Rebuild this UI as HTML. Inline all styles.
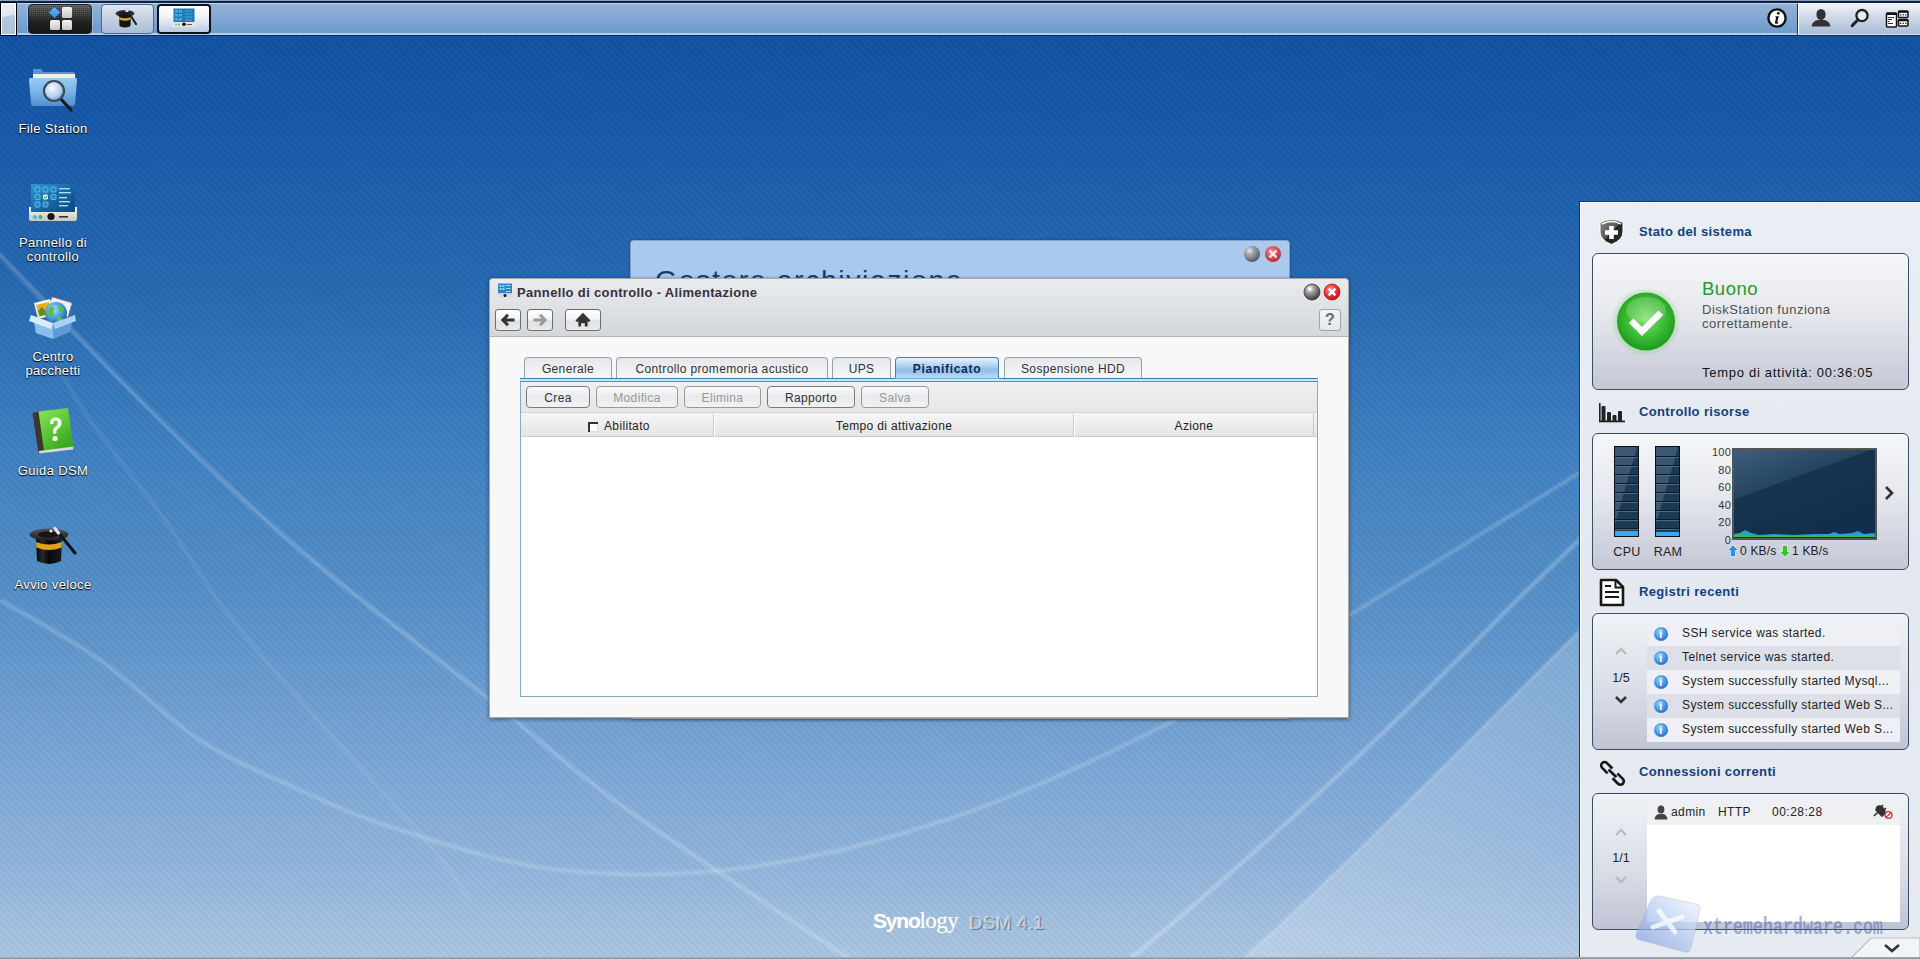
<!DOCTYPE html>
<html><head><meta charset="utf-8">
<style>
*{box-sizing:border-box;margin:0;padding:0}
html,body{width:1920px;height:959px;overflow:hidden}
body{position:relative;font-family:"Liberation Sans",sans-serif;
background:linear-gradient(to bottom,#0f4f9e 0px,#1253a3 50px,#1658a8 120px,#276ab2 300px,#3f80c2 450px,#5690c8 600px,#7aa6d6 760px,#90b4dc 860px,#a4c1e0 930px,#aac6e3 959px);}
.abs{position:absolute}
#stripes{position:absolute;left:0;top:0;width:1920px;height:959px;
background:repeating-linear-gradient(45deg,rgba(0,0,0,0.03) 0px,rgba(0,0,0,0.03) 2px,rgba(255,255,255,0.02) 2.5px,rgba(255,255,255,0.02) 4.5px,rgba(0,0,0,0.03) 5px)}
/* taskbar */
#tb{position:absolute;left:0;top:0;width:1920px;height:36px;
background:linear-gradient(to bottom,#8a9fbc 0,#8a9fbc 1px,#0d2244 1px,#0d2244 3px,#bcd6f0 3px,#bcd6f0 4px,#94b2d8 4px,#6e9acc 33px,#b4d0ee 33px,#b4d0ee 35px,#0a2a5a 35px,#0a2a5a 36px)}
.icolbl{position:absolute;width:106px;left:0;text-align:center;color:#fff;font-size:13px;line-height:14px;letter-spacing:0.35px;
text-shadow:0 1px 1px #000,0 0 2px rgba(0,0,0,.6)}
.title{font-weight:bold}
</style><style>
.nbtn{border:1px solid #6e6e6e;border-radius:3px;background:linear-gradient(to bottom,#ffffff 0,#f4f4f4 45%,#e2e2e2 55%,#eaeaea 100%)}
.tab{top:357px;height:22px;padding-top:1px;border:1px solid #9aa0a8;border-bottom:none;border-radius:4px 4px 0 0;background:linear-gradient(to bottom,#e4e6ea 0,#eceef2 40%,#f6f8fb 100%);
 text-align:center;font-size:12px;line-height:21px;color:#333;letter-spacing:.35px;white-space:nowrap}
.tab.act{border-color:#4a7ca8;background:linear-gradient(to bottom,#e8f4fc 0,#b4d4f0 30%,#90bce6 50%,#b8e0f8 85%,#c8ecfc 100%);font-weight:bold;color:#0b2a5a;letter-spacing:.7px;height:25px}
.tbtn{top:386px;height:22px;padding-top:1px;border:1px solid #7a7a7a;border-radius:4px;background:linear-gradient(to bottom,#fafbfc 0,#e8eaee 50%,#f0f2f4 100%);
 text-align:center;font-size:12px;line-height:20px;color:#333;letter-spacing:.35px;white-space:nowrap}
.tbtn.dis{color:#999;border-color:#999}
.hdr{top:419px;font-size:12px;line-height:15px;color:#222;letter-spacing:.35px;white-space:nowrap}
.wtitle{left:1639px;font-size:13px;line-height:16px;font-weight:bold;color:#11407e;letter-spacing:.35px;white-space:nowrap}
.wbox{left:1592px;width:317px;border:1px solid #3e4c60;border-radius:6px;background:linear-gradient(to bottom,#f6f7f9 0,#e6e8ee 45%,#c4c8d6 100%)}
.gauge{top:446px;width:25px;height:91px;background:repeating-linear-gradient(to bottom,#35526e 0,#35526e 1px,#1b3752 1px,#1b3752 9px);border:2px solid #111;box-shadow:inset 0 0 0 0 #000}
.logrow{left:1647px;width:253px;height:24px;font-size:12px;line-height:22px;color:#222;letter-spacing:.4px;white-space:nowrap;padding-left:35px}
.ii{position:absolute;font-style:normal;left:7px;top:5px;width:14px;height:14px;border-radius:50%;background:radial-gradient(circle at 40% 35%,#9ad0ff 0,#3a8ae0 55%,#1a5ab0 100%)}
.ii:after{content:"i";position:absolute;left:0;top:0;width:14px;text-align:center;color:#fff;font-weight:bold;font-size:11px;line-height:14px}
</style>
</head>
<body>
<div id="stripes"></div>
<svg class="abs" style="left:0;top:0" width="1920" height="959" viewBox="0 0 1920 959">
<defs><filter id="bl" x="-20%" y="-20%" width="140%" height="140%"><feGaussianBlur stdDeviation="1.5"/></filter>
<filter id="bl2" x="-20%" y="-20%" width="140%" height="140%"><feGaussianBlur stdDeviation="12"/></filter></defs>
<linearGradient id="bandg" gradientUnits="userSpaceOnUse" x1="1412" y1="790" x2="1540" y2="918"><stop offset="0" stop-color="#fff" stop-opacity=".2"/><stop offset="1" stop-color="#fff" stop-opacity=".1"/></linearGradient>
<g fill="none" stroke="#fff" filter="url(#bl)">
<path d="M-20.0,234.0 C-16.7,237.5 -28.3,225.7 0.0,255.0 C28.3,284.3 100.0,360.8 150.0,410.0 C200.0,459.2 243.3,501.7 300.0,550.0 C356.7,598.3 435.8,657.0 490.0,700.0 C544.2,743.0 565.0,764.8 625.0,808.0 C685.0,851.2 812.5,933.8 850.0,959.0" stroke-width="3" stroke-opacity="0.28"/>
<path d="M0.0,600.0 C16.7,610.0 66.7,636.7 100.0,660.0 C133.3,683.3 166.7,718.3 200.0,740.0 C233.3,761.7 266.7,775.0 300.0,790.0 C333.3,805.0 356.7,816.7 400.0,830.0 C443.3,843.3 501.7,863.8 560.0,870.0 C618.3,876.2 683.3,876.2 750.0,867.0 C816.7,857.8 889.5,839.3 960.0,815.0 C1030.5,790.7 1108.0,754.3 1173.0,721.0 C1238.0,687.7 1278.8,658.5 1350.0,615.0 C1421.2,571.5 1558.3,485.8 1600.0,460.0" stroke-width="3" stroke-opacity="0.25"/>
<path d="M60.0,370.0 C65.0,378.3 72.5,395.0 90.0,420.0 C107.5,445.0 142.5,488.3 165.0,520.0 C187.5,551.7 202.5,580.0 225.0,610.0 C247.5,640.0 272.5,668.3 300.0,700.0 C327.5,731.7 365.0,771.7 390.0,800.0 C415.0,828.3 436.7,853.3 450.0,870.0 C463.3,886.7 466.7,895.0 470.0,900.0" stroke-width="2.5" stroke-opacity="0.12"/>
<path d="M1130,959 C1250,860 1380,740 1517,600 L1600,520" stroke-width="3.5" stroke-opacity="0.3"/>
<path d="M1243,959 C1330,880 1420,790 1600,610" stroke-width="2" stroke-opacity="0.25"/>
</g>
<path d="M1243,959 C1330,880 1420,790 1600,610 L1600,959Z" fill="url(#bandg)"/>
</svg>

<div id="tb"></div>
<!-- left mini box -->
<div class="abs" style="left:0;top:2px;width:17px;height:34px;background:#000;"></div>
<div class="abs" style="left:1px;top:3px;width:15px;height:32px;background:#fff;"></div>
<div class="abs" style="left:2px;top:4px;width:13px;height:30px;background:linear-gradient(170deg,#e8eef6 0,#dde6f0 40%,#b7c9df 41%,#aebfd8 100%)"></div>
<!-- start button -->
<div class="abs" style="left:28px;top:4px;width:64px;height:30px;border-radius:4px;border:1px solid #1c2535;
background:linear-gradient(to bottom,#7c7c7c 0,#555 30%,#2a2a2a 60%,#1e1e1e 100%);box-shadow:0 0 0 1px rgba(200,220,240,.45)"></div>
<div class="abs" style="left:29px;top:5px;width:62px;height:28px;border-radius:3px;opacity:.3;
background:repeating-linear-gradient(90deg,#000 0 1px,transparent 1px 2px),repeating-linear-gradient(0deg,#000 0 1px,transparent 1px 2px)"></div>
<svg class="abs" style="left:28px;top:4px" width="64" height="30">
<defs><linearGradient id="sq" x1="0" y1="0" x2="0" y2="1"><stop offset="0" stop-color="#f4f4f4"/><stop offset="1" stop-color="#c8c8c8"/></linearGradient>
<linearGradient id="dia" x1="0" y1="0" x2="0" y2="1"><stop offset="0" stop-color="#6ab8ff"/><stop offset="1" stop-color="#2f86e0"/></linearGradient></defs>
<path d="M26.5,2.5 L32.5,8.5 L26.5,14.5 L20.5,8.5Z" fill="url(#dia)" stroke="#1a3a6a" stroke-width=".6"/>
<rect x="34" y="3" width="10" height="11" rx="1.5" fill="url(#sq)"/>
<rect x="22" y="16" width="10" height="10" rx="1.5" fill="url(#sq)"/>
<rect x="34" y="16" width="10" height="10" rx="1.5" fill="url(#sq)"/>
</svg>
<!-- hat button -->
<div class="abs" style="left:101px;top:4px;width:53px;height:30px;border-radius:4px;border:1px solid #50688c;
background:linear-gradient(to bottom,#dfe7f1 0,#c3d1e3 50%,#a9bdd8 100%)"></div>
<svg class="abs" style="left:115px;top:7px" width="26" height="23" viewBox="0 0 26 23">
<ellipse cx="10" cy="6.5" rx="9.5" ry="3.5" fill="#333"/>
<path d="M4,7 L4.5,19 Q10,22 15.5,19 L16,7Z" fill="#141414"/>
<path d="M4.2,10 Q10,12.5 15.8,10 L15.7,12.5 Q10,15 4.3,12.5Z" fill="#d9a520"/>
<ellipse cx="10" cy="6.5" rx="6" ry="1.8" fill="#1a1a1a"/>
<path d="M12,3 L21,17" stroke="#222" stroke-width="2.2" stroke-linecap="round"/>
<circle cx="12" cy="3.5" r="1.8" fill="#e8d0f0"/>
</svg>
<!-- control panel button -->
<div class="abs" style="left:157px;top:4px;width:54px;height:30px;border-radius:4px;border:2px solid #0a1220;
background:linear-gradient(to bottom,#ffffff 0,#f0f4f8 40%,#b8cbe2 100%)"></div>
<svg class="abs" style="left:172px;top:8px" width="24" height="20" viewBox="0 0 24 20">
<rect x="1.5" y="0.5" width="21" height="14" fill="#1f78b8"/>
<g fill="#58b8e8" opacity=".8"><rect x="3" y="2" width="3" height="2.5"/><rect x="7" y="2" width="3" height="2.5"/><rect x="3" y="6" width="3" height="2.5"/><rect x="7" y="6" width="3" height="2.5"/><rect x="3" y="10" width="3" height="2.5"/><rect x="7" y="10" width="3" height="2.5"/>
<rect x="13" y="2.5" width="7" height="1"/><rect x="13" y="5.5" width="7" height="1"/><rect x="13" y="8.5" width="7" height="1"/><rect x="13" y="11.5" width="7" height="1"/></g>
<rect x="0.5" y="14" width="23" height="5" fill="#e4e4e4"/>
<circle cx="4" cy="16.5" r="1" fill="#5ab0e0"/><circle cx="7" cy="16.5" r="1" fill="#5cc05c"/><circle cx="12" cy="16.2" r="1.8" fill="#111"/>
<rect x="15" y="16" width="5" height="1" fill="#555"/>
</svg>
<!-- right side taskbar -->
<svg class="abs" style="left:1766px;top:7px" width="22" height="22" viewBox="0 0 22 22">
<circle cx="11" cy="11" r="8.6" fill="#fff" stroke="#111" stroke-width="2.4"/>
<circle cx="12.3" cy="6.3" r="1.4" fill="#111"/>
<path d="M9.6,9.2 L12.8,9.2 L11.3,15 Q11.2,15.8 12.4,15.1 L12.2,16.2 Q10.5,17.2 9.3,16.6 Q8.7,16.2 9,15.2 L10.2,10.4 L9.3,10.4Z" fill="#111"/>
</svg>
<div class="abs" style="left:1797px;top:3px;width:123px;height:32px;background:linear-gradient(to bottom,#f0f4fa 0,#dfe6f0 20%,#c2cfe2 60%,#a8bbd6 100%);border-left:1px solid #1a3558;border-top:1px solid #fff;box-shadow:inset 1px 0 0 #fff, inset 0 -1px 0 #d8e4f2"></div>
<svg class="abs" style="left:1810px;top:8px" width="22" height="20" viewBox="0 0 22 20">
<ellipse cx="11" cy="6.5" rx="4.6" ry="5.6" fill="#333"/>
<path d="M1.5,18.5 Q2.5,12.5 8.5,12 L13.5,12 Q19.5,12.5 20.5,18.5Z" fill="#333"/>
</svg>
<svg class="abs" style="left:1849px;top:8px" width="22" height="20" viewBox="0 0 22 20">
<circle cx="13" cy="7.6" r="5.6" fill="#e8eef6" stroke="#222" stroke-width="2.3"/>
<path d="M9,11.8 L3.2,17.6" stroke="#222" stroke-width="3" stroke-linecap="round"/>
</svg>
<svg class="abs" style="left:1885px;top:9px" width="24" height="20" viewBox="0 0 24 20">
<rect x="1.5" y="4" width="10" height="14" rx="1" fill="#fff" stroke="#111" stroke-width="1.5"/>
<rect x="1.5" y="4" width="10" height="2" fill="#111"/>
<g fill="#333"><rect x="3" y="8" width="6" height="1"/><rect x="3" y="10" width="4" height="1"/><rect x="3" y="12" width="1.5" height="1"/><rect x="3" y="14" width="5" height="1"/></g>
<rect x="13.5" y="2" width="9.5" height="6.5" rx="1" fill="#fff" stroke="#111" stroke-width="1.5"/>
<rect x="13.5" y="2" width="9.5" height="1.8" fill="#111"/>
<rect x="13.5" y="10.5" width="9.5" height="6.5" rx="1" fill="#fff" stroke="#111" stroke-width="1.5"/>
<rect x="13.5" y="10.5" width="9.5" height="1.8" fill="#111"/>
<g fill="#222"><rect x="15" y="5.2" width="1.3" height="1.3"/><rect x="17.6" y="5.2" width="1.3" height="1.3"/><rect x="20.2" y="5.2" width="1.3" height="1.3"/><rect x="15" y="13.7" width="1.3" height="1.3"/><rect x="17.6" y="13.7" width="1.3" height="1.3"/><rect x="20.2" y="13.7" width="1.3" height="1.3"/></g>
</svg>
<!-- File Station -->
<svg class="abs" style="left:27px;top:66px" width="52" height="48" viewBox="0 0 52 48">
<defs>
<linearGradient id="fold" x1="0" y1="0" x2="0" y2="1"><stop offset="0" stop-color="#9ccbf0"/><stop offset=".5" stop-color="#7ab4e6"/><stop offset="1" stop-color="#4d8fd0"/></linearGradient>
<radialGradient id="lens" cx=".4" cy=".35" r=".7"><stop offset="0" stop-color="#f4f8ff"/><stop offset=".6" stop-color="#b8d2ee"/><stop offset="1" stop-color="#6a98c8"/></radialGradient>
</defs>
<path d="M6,3 L14,3 L16,6 L46,6 Q48,6 48,8 L48,12 L6,12Z" fill="#5a95d0"/>
<rect x="6" y="8" width="42" height="6" fill="#f2f0e0"/>
<path d="M3,12 L49,12 Q50,12 50,14 L48,38 Q48,40 46,40 L6,40 Q4,40 4,38 L2,14 Q2,12 3,12Z" fill="url(#fold)"/>
<path d="M33,32 L44,44" stroke="#1a1a1a" stroke-width="3.2" stroke-linecap="round"/>
<circle cx="27" cy="25" r="10" fill="url(#lens)" stroke="#39485a" stroke-width="2.2"/>
</svg>
<div class="icolbl" style="top:122px">File Station</div>

<!-- Control panel -->
<svg class="abs" style="left:28px;top:183px" width="50" height="40" viewBox="0 0 50 40">
<defs><linearGradient id="scr" x1="0" y1="0" x2="1" y2="1"><stop offset="0" stop-color="#2f95d6"/><stop offset=".6" stop-color="#15609e"/><stop offset="1" stop-color="#0c4a86"/></linearGradient>
<linearGradient id="base" x1="0" y1="0" x2="0" y2="1"><stop offset="0" stop-color="#f8f8f8"/><stop offset="1" stop-color="#c6c6c6"/></linearGradient></defs>
<rect x="3" y="1" width="44" height="28" fill="url(#scr)"/>
<g fill="#2a8cc4" stroke="#5cc0ec" stroke-width="1" opacity=".95">
<rect x="7" y="4" width="5" height="5" rx="1"/><rect x="15" y="4" width="5" height="5" rx="1"/><rect x="23" y="4" width="5" height="5" rx="1"/>
<rect x="7" y="11.5" width="5" height="5" rx="1"/><rect x="23" y="11.5" width="5" height="5" rx="1"/>
<rect x="7" y="19" width="5" height="5" rx="1"/><rect x="15" y="19" width="5" height="5" rx="1"/></g>
<rect x="15" y="11.5" width="5" height="5" rx="1" fill="#d8f0e0"/>
<path d="M16,14 L17.3,15.3 L19.3,12.8" stroke="#2a8a3a" stroke-width="1" fill="none"/>
<g fill="#a8dcf8"><rect x="31" y="5" width="11" height="1.4"/><rect x="31" y="9" width="12" height="1.4"/><rect x="31" y="14" width="8" height="1.4"/><rect x="31" y="18" width="11" height="1.4"/><rect x="31" y="22" width="9" height="1.4"/></g>
<path d="M1,24 L3,24 L3,29 L47,29 L47,24 L49,24 L49,36 Q49,38 47,38 L3,38 Q1,38 1,36Z" fill="url(#base)"/>
<circle cx="7" cy="34" r="2" fill="#4ab0e8"/><circle cx="12.5" cy="34" r="2" fill="#40b848"/>
<circle cx="23" cy="33.5" r="3.6" fill="#151515"/>
<rect x="31" y="33" width="9" height="1.6" fill="#333"/>
</svg>
<div class="icolbl" style="top:236px">Pannello di<br>controllo</div>

<!-- Centro pacchetti -->
<svg class="abs" style="left:28px;top:293px" width="50" height="50" viewBox="0 0 50 50">
<defs><linearGradient id="box" x1="0" y1="0" x2="0" y2="1"><stop offset="0" stop-color="#bfe0fa"/><stop offset="1" stop-color="#6ea8e0"/></linearGradient>
<radialGradient id="globe" cx=".4" cy=".35" r=".7"><stop offset="0" stop-color="#9ee0ff"/><stop offset=".6" stop-color="#3a9ad8"/><stop offset="1" stop-color="#1a5aa0"/></radialGradient></defs>
<path d="M24,4 L44,10 L40,24 L20,18Z" fill="#f0f0f0" stroke="#e06060" stroke-width="1" stroke-dasharray="2 2"/>
<path d="M6,10 L22,6 L26,22 L10,26Z" fill="#f4f4e8"/>
<path d="M8,12 L21,9 L24,21 L11,24Z" fill="#e8b020"/>
<path d="M10,18 L14,14 L18,19 L22,16 L23,20 L12,23Z" fill="#5a8a2a"/>
<circle cx="28" cy="20" r="11" fill="url(#globe)"/>
<path d="M21,15 Q25,12 27,16 Q24,19 26,23 Q22,24 20,20Z M30,12 Q35,13 36,18 Q33,20 31,17Z M29,24 Q34,23 35,28 Q31,30 29,28Z" fill="#6ab840"/>
<path d="M5,24 L25,31 L25,46 L8,40Z" fill="#8cc0ec"/>
<path d="M25,31 L45,24 L42,39 L25,46Z" fill="#5e9ad6"/>
<path d="M3,22 L25,30 L23,36 L1,28Z" fill="#d4ecfc"/>
<path d="M25,30 L47,22 L48,28 L27,36Z" fill="#a8d2f4"/>
</svg>
<div class="icolbl" style="top:350px">Centro<br>pacchetti</div>

<!-- Guida DSM -->
<svg class="abs" style="left:30px;top:408px" width="46" height="48" viewBox="0 0 46 48">
<defs><linearGradient id="book" x1="0" y1="0" x2=".6" y2="1"><stop offset="0" stop-color="#8ee858"/><stop offset=".5" stop-color="#62c83a"/><stop offset="1" stop-color="#3aa820"/></linearGradient></defs>
<path d="M2.5,5 L11,3 L17,44 L8.5,45.5Z" fill="#3e3430"/>
<path d="M8.5,3.5 L38,0 L43.5,39 L14,43Z" fill="url(#book)"/>
<path d="M8.5,43 L43.5,38.5 L43,41.5 L9.5,45.5Z" fill="#d8d8d8"/>
<g transform="translate(-1.5,0)"><path d="M21.5,16 Q21,10 27,9.5 Q33,9.5 33,15 Q33,19 29,21 Q27.5,22 27.8,25.5 L24.5,25.8 Q23.8,20.5 27,18.5 Q29.5,17 29.3,14.8 Q29,12.5 27,12.6 Q24.8,12.8 25,16Z" fill="#f4fff0"/>
<circle cx="26.5" cy="30.5" r="2.6" fill="#f4fff0"/></g>
</svg>
<div class="icolbl" style="top:464px">Guida DSM</div>

<!-- Avvio veloce -->
<svg class="abs" style="left:27px;top:520px" width="52" height="50" viewBox="0 0 52 50">
<defs><linearGradient id="hat" x1="0" y1="0" x2="1" y2="0"><stop offset="0" stop-color="#050505"/><stop offset=".25" stop-color="#2a2a2a"/><stop offset=".5" stop-color="#080808"/><stop offset="1" stop-color="#1c1c1c"/></linearGradient>
<linearGradient id="brim" x1="0" y1="0" x2="0" y2="1"><stop offset="0" stop-color="#555"/><stop offset="1" stop-color="#1e1e1e"/></linearGradient></defs>
<path d="M9,18 L10,41 Q22,47 34,41 L35,18Z" fill="url(#hat)"/>
<path d="M9.2,22 Q22,27 34.8,22 L34.6,27.5 Q22,32.5 9.4,27.5Z" fill="#e0a418"/>
<ellipse cx="22" cy="14.5" rx="19.5" ry="6" fill="url(#brim)"/>
<ellipse cx="21" cy="14.5" rx="10" ry="3.3" fill="#151515"/>
<path d="M28.5,9 L48,33" stroke="#141414" stroke-width="3.2" stroke-linecap="round"/>
<path d="M28,8.5 L31.5,13" stroke="#e8dcf4" stroke-width="3.4" stroke-linecap="round"/>
<circle cx="24" cy="11" r="1.6" fill="#fff" opacity=".9"/>
</svg>
<div class="icolbl" style="top:578px">Avvio veloce</div>
<!-- background window: Gestore archiviazione -->
<div class="abs" style="left:630px;top:240px;width:660px;height:480px;border-radius:4px 4px 0 0;background:linear-gradient(to bottom,#a9c9ed 0,#a9c9ed 100px,#c8d0d8 100px);border:1px solid #7fa3cc;border-bottom:1px solid #6a7a8a;box-shadow:0 0 3px rgba(0,0,0,.35)"></div>
<div class="abs" style="left:655px;top:263px;font-size:28.5px;line-height:34px;color:#0f3f78;letter-spacing:1.55px;white-space:nowrap">Gestore archiviazione</div>
<svg class="abs" style="left:1240px;top:244px" width="44" height="20" viewBox="0 0 44 20">
<defs><radialGradient id="ballg" cx=".35" cy=".3" r=".75"><stop offset="0" stop-color="#f4f4f4"/><stop offset=".35" stop-color="#9a9a9a"/><stop offset="1" stop-color="#3a3a3a"/></radialGradient>
<radialGradient id="ballr" cx=".4" cy=".35" r=".75"><stop offset="0" stop-color="#ff8080"/><stop offset=".6" stop-color="#e02020"/><stop offset="1" stop-color="#901010"/></radialGradient></defs>
<circle cx="12" cy="10" r="8" fill="url(#ballg)" opacity=".8"/>
<circle cx="33" cy="10" r="8" fill="url(#ballr)" opacity=".8"/>
<path d="M29.5,6.5 L36.5,13.5 M36.5,6.5 L29.5,13.5" stroke="#fff" stroke-width="2.4" opacity=".85"/>
</svg>

<!-- main window -->
<div class="abs" id="mw" style="left:489px;top:278px;width:860px;height:440px;border-radius:4px 4px 0 0;background:#f8f8f8;border:1px solid #a9a9a9;box-shadow:0 1px 4px rgba(0,0,0,.45)">
 <div class="abs" style="left:0;top:0;width:858px;height:58px;border-radius:3px 3px 0 0;background:linear-gradient(to bottom,#e9ebee 0,#dfe2e6 45%,#d3d6da 100%);border-bottom:1px solid #b5b5b5"></div>
</div>
<svg class="abs" style="left:497px;top:283px" width="16" height="15" viewBox="0 0 16 15">
<rect x="1" y="0.5" width="14" height="10" fill="#2a88c8"/>
<g fill="#8ad8ff"><rect x="2.5" y="2" width="2" height="2"/><rect x="5.5" y="2" width="2" height="2"/><rect x="2.5" y="5" width="2" height="2"/><rect x="5.5" y="5" width="2" height="2"/><rect x="9" y="2" width="4.5" height="1"/><rect x="9" y="5" width="4.5" height="1"/><rect x="9" y="8" width="4.5" height="1"/></g>
<rect x="0.5" y="10.5" width="15" height="4" fill="#ddd"/><circle cx="8" cy="12.5" r="1.5" fill="#111"/>
</svg>
<div class="abs title" style="left:517px;top:285px;font-size:13px;line-height:16px;color:#3a303a;letter-spacing:0.34px;white-space:nowrap">Pannello di controllo - Alimentazione</div>
<!-- min / close -->
<svg class="abs" style="left:1300px;top:281px" width="44" height="22" viewBox="0 0 44 22">
<defs><radialGradient id="ballg2" cx=".38" cy=".3" r=".8"><stop offset="0" stop-color="#fafafa"/><stop offset=".25" stop-color="#b0b0b0"/><stop offset=".7" stop-color="#5a5a5a"/><stop offset="1" stop-color="#303030"/></radialGradient>
<radialGradient id="ballr2" cx=".4" cy=".35" r=".8"><stop offset="0" stop-color="#ff9090"/><stop offset=".55" stop-color="#e42a2a"/><stop offset="1" stop-color="#a01010"/></radialGradient></defs>
<circle cx="12" cy="11" r="8" fill="url(#ballg2)" stroke="#333" stroke-width=".8"/><circle cx="9.5" cy="8" r="1.8" fill="#fff" opacity=".9"/>
<circle cx="32" cy="11" r="8" fill="url(#ballr2)" stroke="#b01818" stroke-width=".8"/>
<path d="M28.6,7.6 L35.4,14.4 M35.4,7.6 L28.6,14.4" stroke="#fff" stroke-width="2.6"/>
</svg>
<!-- nav buttons -->
<div class="abs nbtn" style="left:495px;top:309px;width:26px;height:22px"></div>
<div class="abs nbtn" style="left:527px;top:309px;width:26px;height:22px"></div>
<div class="abs nbtn" style="left:565px;top:309px;width:36px;height:22px"></div>
<div class="abs nbtn" style="left:1319px;top:309px;width:22px;height:22px;border-color:#a4a4a4;background:linear-gradient(to bottom,#f2f3f5,#e6e8ea)"></div>
<svg class="abs" style="left:495px;top:309px" width="110" height="22" viewBox="0 0 110 22">
<path d="M8,11 L19.5,11 M13,5.8 L7.8,11 L13,16.2" stroke="#333" stroke-width="3" fill="none" stroke-linejoin="miter"/>
<path d="M50,11 L38.5,11 M45,5.8 L50.2,11 L45,16.2" stroke="#9a9a9a" stroke-width="3" fill="none" stroke-linejoin="miter"/>
<path d="M81.4,12.4 L87.9,5.6 L94.6,12.4" stroke="#333" stroke-width="2.6" fill="none"/><path d="M83.4,11.2 L87.9,7 L92.6,11.2 L92.6,17.6 L89.8,17.6 L89.8,14.2 L86.1,14.2 L86.1,17.6 L83.4,17.6Z" fill="#333"/>
</svg>
<div class="abs" style="left:1319px;top:309px;width:22px;height:22px;text-align:center;font-weight:bold;font-size:16px;line-height:22px;color:#6a6a6a">?</div>

<!-- tabs -->
<div class="abs tab" style="left:524px;width:88px">Generale</div>
<div class="abs tab" style="left:616px;width:212px">Controllo promemoria acustico</div>
<div class="abs tab" style="left:832px;width:59px">UPS</div>
<div class="abs tab act" style="left:895px;width:104px">Pianificato</div>
<div class="abs tab" style="left:1004px;width:138px">Sospensione HDD</div>
<!-- panel -->
<div class="abs" style="left:520px;top:378px;width:798px;height:319px;border:1px solid #86abc6;background:#fff"></div>
<div class="abs" style="left:520px;top:378px;width:375px;height:4px;background:linear-gradient(to bottom,#3a7aa8 0,#3a7aa8 1px,#b8ecff 1px,#b8ecff 3px,#5a8eb4 3px)"></div>
<div class="abs" style="left:999px;top:378px;width:319px;height:4px;background:linear-gradient(to bottom,#3a7aa8 0,#3a7aa8 1px,#b8ecff 1px,#b8ecff 3px,#5a8eb4 3px)"></div>
<div class="abs" style="left:895px;top:379px;width:104px;height:3px;background:linear-gradient(to bottom,#c4ecfc,#b8ecff 2px,#5a8eb4 2px)"></div>
<div class="abs" style="left:521px;top:382px;width:796px;height:31px;background:linear-gradient(to bottom,#f0f0f0,#e6e6e6);border-bottom:1px solid #d4d4d4"></div>
<div class="abs tbtn" style="left:526px;width:64px">Crea</div>
<div class="abs tbtn dis" style="left:596px;width:82px">Modifica</div>
<div class="abs tbtn dis" style="left:684px;width:77px">Elimina</div>
<div class="abs tbtn" style="left:767px;width:88px">Rapporto</div>
<div class="abs tbtn dis" style="left:861px;width:68px">Salva</div>
<!-- grid header -->
<div class="abs" style="left:521px;top:413px;width:796px;height:24px;background:linear-gradient(to bottom,#f6f6f6 0,#ededed 50%,#e4e4e4 100%);border-bottom:1px solid #cbcbcb"></div>
<div class="abs" style="left:713px;top:413px;width:2px;height:24px;background:linear-gradient(to right,#c8c8c8 1px,#fff 1px)"></div>
<div class="abs" style="left:1073px;top:413px;width:2px;height:24px;background:linear-gradient(to right,#c8c8c8 1px,#fff 1px)"></div>
<div class="abs" style="left:1313px;top:413px;width:1px;height:24px;background:#c8c8c8"></div>
<div class="abs" style="left:588px;top:422px;width:10px;height:10px;background:#fff;border-left:2px solid #333;border-top:2px solid #333;box-shadow:inset -1px -1px 0 #ddd"></div>
<div class="abs hdr" style="left:604px">Abilitato</div>
<div class="abs hdr" style="left:715px;width:358px;text-align:center">Tempo di attivazione</div>
<div class="abs hdr" style="left:1075px;width:238px;text-align:center">Azione</div>
<!-- widget panel -->
<div class="abs" style="left:1579px;top:201px;width:341px;height:758px;background:linear-gradient(to bottom,#e9eef5 0,#e4e9f1 50%,#e6ebf2 100%);border-left:1px solid #17365e;border-top:1px solid #17365e;box-shadow:inset 1px 1px 0 #fff"></div>

<!-- section 1: Stato del sistema -->
<svg class="abs" style="left:1598px;top:218px" width="27" height="28" viewBox="0 0 27 28">
<defs><linearGradient id="shg" x1="0" y1="0" x2="1" y2="1"><stop offset="0" stop-color="#888"/><stop offset=".5" stop-color="#555"/><stop offset=".51" stop-color="#222"/><stop offset="1" stop-color="#333"/></linearGradient></defs>
<path d="M13.5,1.5 Q20,1.5 25,4.5 L25,14 Q25,22 13.5,26.5 Q2,22 2,14 L2,4.5 Q7,1.5 13.5,1.5Z" fill="url(#shg)" stroke="#fff" stroke-width="1"/>
<path d="M4,6 Q13.5,1 23,6" stroke="#fff" stroke-width="1.5" fill="none"/>
<path d="M11.2,8 L15.8,8 L15.8,12.2 L20,12.2 L20,16.8 L15.8,16.8 L15.8,21 L11.2,21 L11.2,16.8 L7,16.8 L7,12.2 L11.2,12.2Z" fill="#fff"/>
</svg>
<div class="abs wtitle" style="top:224px">Stato del sistema</div>
<div class="abs wbox" style="top:253px;height:137px"></div>
<svg class="abs" style="left:1610px;top:286px" width="72" height="72" viewBox="0 0 72 72">
<defs><radialGradient id="okg" cx=".5" cy=".45" r=".55"><stop offset="0" stop-color="#80e070"/><stop offset=".6" stop-color="#3cbc34"/><stop offset="1" stop-color="#1a9a1a"/></radialGradient>
<radialGradient id="okglow" cx=".5" cy=".5" r=".5"><stop offset=".7" stop-color="#7ad070" stop-opacity=".6"/><stop offset="1" stop-color="#7ad070" stop-opacity="0"/></radialGradient></defs>
<circle cx="36" cy="36" r="35" fill="url(#okglow)"/>
<circle cx="36" cy="35.5" r="29" fill="url(#okg)"/>
<ellipse cx="36" cy="24" rx="20" ry="13" fill="#fff" opacity=".18"/>
<path d="M23.5,37 L32,45.5 L48.5,29" stroke="#fff" stroke-width="6.5" fill="none" stroke-linecap="square"/>
</svg>
<div class="abs" style="left:1702px;top:279px;font-size:18.5px;line-height:20px;color:#2a982c;letter-spacing:.5px">Buono</div>
<div class="abs" style="left:1702px;top:303px;font-size:13px;line-height:14px;color:#505050;letter-spacing:.5px;white-space:nowrap">DiskStation funziona<br>correttamente.</div>
<div class="abs" style="left:1702px;top:366px;font-size:13px;line-height:14px;color:#111;letter-spacing:.72px;white-space:nowrap">Tempo di attività: 00:36:05</div>

<!-- section 2: Controllo risorse -->
<svg class="abs" style="left:1598px;top:402px" width="28" height="21" viewBox="0 0 28 21">
<g fill="#222"><rect x="1" y="1" width="1.6" height="19"/><rect x="3.5" y="4" width="4" height="16" rx="1"/><rect x="9" y="10" width="4" height="10" rx="1"/><rect x="14.5" y="13" width="4" height="7" rx="1"/><rect x="20" y="9" width="4" height="11" rx="1"/><rect x="1" y="18.5" width="26" height="1.8"/></g>
</svg>
<div class="abs wtitle" style="top:404px">Controllo risorse</div>
<div class="abs wbox" style="top:433px;height:137px"></div>
<svg class="abs" style="left:1614px;top:446px" width="25" height="91" viewBox="0 0 25 91">
<rect x="0" y="0" width="25" height="91" fill="#0a0f16"/>
<rect x="1" y="1" width="23" height="89" fill="#1d3a55"/>
<path d="M1,1 L23,1 L1,78Z" fill="#46627c" opacity=".75"/>
<rect x="1" y="10" width="23" height="1" fill="#0c1a28"/><rect x="1" y="11" width="23" height="1" fill="#5a7690" opacity=".8"/><rect x="1" y="19" width="23" height="1" fill="#0c1a28"/><rect x="1" y="20" width="23" height="1" fill="#5a7690" opacity=".8"/><rect x="1" y="28" width="23" height="1" fill="#0c1a28"/><rect x="1" y="29" width="23" height="1" fill="#5a7690" opacity=".8"/><rect x="1" y="37" width="23" height="1" fill="#0c1a28"/><rect x="1" y="38" width="23" height="1" fill="#5a7690" opacity=".8"/><rect x="1" y="46" width="23" height="1" fill="#0c1a28"/><rect x="1" y="47" width="23" height="1" fill="#5a7690" opacity=".8"/><rect x="1" y="55" width="23" height="1" fill="#0c1a28"/><rect x="1" y="56" width="23" height="1" fill="#5a7690" opacity=".8"/><rect x="1" y="64" width="23" height="1" fill="#0c1a28"/><rect x="1" y="65" width="23" height="1" fill="#5a7690" opacity=".8"/><rect x="1" y="73" width="23" height="1" fill="#0c1a28"/><rect x="1" y="74" width="23" height="1" fill="#5a7690" opacity=".8"/><rect x="1" y="82" width="23" height="1" fill="#0c1a28"/><rect x="1" y="83" width="23" height="1" fill="#5a7690" opacity=".8"/>
<rect x="1" y="85" width="23" height="5" fill="#38a8f0"/>
</svg>
<svg class="abs" style="left:1655px;top:446px" width="25" height="91" viewBox="0 0 25 91">
<rect x="0" y="0" width="25" height="91" fill="#0a0f16"/>
<rect x="1" y="1" width="23" height="89" fill="#1d3a55"/>
<path d="M1,1 L23,1 L1,78Z" fill="#46627c" opacity=".75"/>
<rect x="1" y="10" width="23" height="1" fill="#0c1a28"/><rect x="1" y="11" width="23" height="1" fill="#5a7690" opacity=".8"/><rect x="1" y="19" width="23" height="1" fill="#0c1a28"/><rect x="1" y="20" width="23" height="1" fill="#5a7690" opacity=".8"/><rect x="1" y="28" width="23" height="1" fill="#0c1a28"/><rect x="1" y="29" width="23" height="1" fill="#5a7690" opacity=".8"/><rect x="1" y="37" width="23" height="1" fill="#0c1a28"/><rect x="1" y="38" width="23" height="1" fill="#5a7690" opacity=".8"/><rect x="1" y="46" width="23" height="1" fill="#0c1a28"/><rect x="1" y="47" width="23" height="1" fill="#5a7690" opacity=".8"/><rect x="1" y="55" width="23" height="1" fill="#0c1a28"/><rect x="1" y="56" width="23" height="1" fill="#5a7690" opacity=".8"/><rect x="1" y="64" width="23" height="1" fill="#0c1a28"/><rect x="1" y="65" width="23" height="1" fill="#5a7690" opacity=".8"/><rect x="1" y="73" width="23" height="1" fill="#0c1a28"/><rect x="1" y="74" width="23" height="1" fill="#5a7690" opacity=".8"/><rect x="1" y="82" width="23" height="1" fill="#0c1a28"/><rect x="1" y="83" width="23" height="1" fill="#5a7690" opacity=".8"/>
<rect x="1" y="86" width="23" height="4" fill="#38a8f0"/>
</svg>
<div class="abs" style="left:1606px;top:545px;width:42px;text-align:center;font-size:12.5px;line-height:14px;color:#222;letter-spacing:.3px">CPU</div>
<div class="abs" style="left:1647px;top:545px;width:42px;text-align:center;font-size:12.5px;line-height:14px;color:#222;letter-spacing:.3px">RAM</div>
<div class="abs" style="left:1700px;top:444px;width:31px;text-align:right;font-size:11px;line-height:17.5px;color:#333;letter-spacing:.2px">100<br>80<br>60<br>40<br>20<br>0</div>
<div class="abs" style="left:1732px;top:448px;width:145px;height:92px;border:2px solid #555;background:linear-gradient(160deg,#3e5e7c 0,#24445f 35%,#17344f 36%,#0f2c48 100%)"></div>
<svg class="abs" style="left:1734px;top:528px" width="141" height="10" viewBox="0 0 141 10">
<path d="M0,9 L0,6 L6,5 L11,2 L17,5 L25,7 L40,6 L60,7 L80,6 L95,6 L100,4 L106,6 L118,5 L124,3 L130,6 L141,5 L141,9Z" fill="#2a9ad8"/>
<path d="M0,9 L0,7 L10,6 L20,8 L40,7 L60,8 L80,7 L141,7 L141,9Z" fill="#30c040"/>
</svg>
<svg class="abs" style="left:1883px;top:485px" width="12" height="16" viewBox="0 0 12 16"><path d="M3,2 L9,8 L3,14" stroke="#333" stroke-width="2.6" fill="none"/></svg>
<svg class="abs" style="left:1726px;top:544px" width="14" height="14" viewBox="0 0 14 14"><path d="M7,1 L12.5,6.5 L9.5,6.5 L9.5,12.5 L4.5,12.5 L4.5,6.5 L1.5,6.5Z" fill="#2a90e0" stroke="#fff" stroke-width=".6"/></svg>
<div class="abs" style="left:1740px;top:544px;font-size:12px;line-height:14px;color:#222;letter-spacing:.2px;white-space:nowrap">0 KB/s</div>
<svg class="abs" style="left:1778px;top:544px" width="14" height="14" viewBox="0 0 14 14"><path d="M7,13 L12.5,7.5 L9.5,7.5 L9.5,1.5 L4.5,1.5 L4.5,7.5 L1.5,7.5Z" fill="#3cc030" stroke="#fff" stroke-width=".6"/></svg>
<div class="abs" style="left:1792px;top:544px;font-size:12px;line-height:14px;color:#222;letter-spacing:.2px;white-space:nowrap">1 KB/s</div>

<!-- section 3: Registri recenti -->
<svg class="abs" style="left:1599px;top:578px" width="26" height="29" viewBox="0 0 26 29">
<path d="M2,2 L17,2 L24,9 L24,27 L2,27Z" fill="#fff" stroke="#181818" stroke-width="2.6" stroke-linejoin="round"/>
<path d="M16.5,2 L16.5,9.5 L24,9.5" fill="none" stroke="#181818" stroke-width="2"/>
<g fill="#181818"><rect x="6" y="7" width="6" height="2"/><rect x="6" y="13" width="14" height="2"/><rect x="6" y="18" width="14" height="2"/></g>
</svg>
<div class="abs wtitle" style="top:584px">Registri recenti</div>
<div class="abs wbox" style="top:613px;height:137px;background:linear-gradient(to bottom,#f0f2f6 0,#d8dce6 60%,#bfc4d4 100%)"></div>
<div class="abs" style="left:1647px;top:622px;width:253px;height:120px;background:#e8e9ee"></div>
<div class="abs logrow" style="top:622px;background:#eef0f5"><i class="ii"></i>SSH service was started.</div>
<div class="abs logrow" style="top:646px;background:#dde0e8"><i class="ii"></i>Telnet service was started.</div>
<div class="abs logrow" style="top:670px;background:#eef0f5"><i class="ii"></i>System successfully started Mysql...</div>
<div class="abs logrow" style="top:694px;background:#dde0e8"><i class="ii"></i>System successfully started Web S...</div>
<div class="abs logrow" style="top:718px;background:#eef0f5"><i class="ii"></i>System successfully started Web S...</div>
<svg class="abs" style="left:1613px;top:645px" width="16" height="62" viewBox="0 0 16 62">
<path d="M3,9 L8,4 L13,9" stroke="#bbb" stroke-width="2.4" fill="none"/>
<path d="M3,52 L8,57 L13,52" stroke="#333" stroke-width="2.6" fill="none"/>
</svg>
<div class="abs" style="left:1600px;top:671px;width:42px;text-align:center;font-size:12.5px;line-height:14px;color:#222">1/5</div>

<!-- section 4: Connessioni correnti -->
<svg class="abs" style="left:1590px;top:755px" width="45" height="35" viewBox="0 0 45 35">
<g transform="translate(22.5,18.4) rotate(45)" fill="none" stroke="#161616" stroke-width="2.6">
<path d="M-3.5,-3.4 L-11.2,-3.4 A3.4,3.4 0 0 0 -11.2,3.4 L-3.5,3.4"/>
<path d="M3.5,-3.4 L11.2,-3.4 A3.4,3.4 0 0 1 11.2,3.4 L3.5,3.4"/>
<path d="M-5.5,0 L5.5,0"/>
</g>
</svg>
<div class="abs wtitle" style="top:764px">Connessioni correnti</div>
<div class="abs wbox" style="top:793px;height:137px;background:linear-gradient(to bottom,#f0f2f6 0,#d8dce6 60%,#bfc4d4 100%)"></div>
<div class="abs" style="left:1647px;top:800px;width:253px;height:25px;background:#eff0f4"></div>
<div class="abs" style="left:1647px;top:825px;width:253px;height:97px;background:#fff"></div>
<svg class="abs" style="left:1654px;top:805px" width="14" height="15" viewBox="0 0 14 15"><ellipse cx="7" cy="4.5" rx="3.4" ry="4" fill="#444"/><path d="M0.5,14.5 Q1,9.5 5,9 L9,9 Q13,9.5 13.5,14.5Z" fill="#444"/></svg>
<div class="abs" style="left:1671px;top:805px;font-size:12px;line-height:14px;color:#222;letter-spacing:.4px;white-space:nowrap">admin</div>
<div class="abs" style="left:1718px;top:805px;font-size:12px;line-height:14px;color:#222;letter-spacing:.4px;white-space:nowrap">HTTP</div>
<div class="abs" style="left:1772px;top:805px;font-size:12px;line-height:14px;color:#222;letter-spacing:.5px;white-space:nowrap">00:28:28</div>
<svg class="abs" style="left:1872px;top:804px" width="22" height="16" viewBox="0 0 22 16">
<path d="M2,12 L6,8 M4,6 L10,12 L12,10 Q14,7 11,4 L10,3 Q7,1 5,3Z M8,4 L11,1 M11,7 L14,4" stroke="#333" stroke-width="1.6" fill="#333"/>
<circle cx="16.5" cy="11" r="3.4" fill="#fff" stroke="#e03030" stroke-width="1.4"/><path d="M14.3,13.2 L18.7,8.8" stroke="#e03030" stroke-width="1.4"/>
</svg>
<svg class="abs" style="left:1613px;top:825px" width="16" height="62" viewBox="0 0 16 62">
<path d="M3,10 L8,5 L13,10" stroke="#bbb" stroke-width="2.4" fill="none"/>
<path d="M3,52 L8,57 L13,52" stroke="#bbb" stroke-width="2.4" fill="none"/>
</svg>
<div class="abs" style="left:1600px;top:851px;width:42px;text-align:center;font-size:12.5px;line-height:14px;color:#222">1/1</div>
<!-- bottom tab -->
<svg class="abs" style="left:1840px;top:936px" width="80" height="23" viewBox="0 0 80 23">
<path d="M10,23 L31,2 L80,2 L80,23Z" fill="#f2f4f8" stroke="#b8bcc4" stroke-width="1.2"/>
<path d="M45,9 L52,15 L59,9" stroke="#333" stroke-width="2.6" fill="none"/>
</svg>
<div class="abs" style="left:0;top:957px;width:1920px;height:2px;background:linear-gradient(to bottom,#a8b0bc,#8a909c)"></div>
<!-- Synology DSM 4.1 -->
<div class="abs" style="left:873px;top:908px;white-space:nowrap;color:#fff;text-shadow:0 0 1px rgba(255,255,255,.4)">
<span style="font-family:'Liberation Sans',sans-serif;font-weight:bold;font-size:21px;letter-spacing:-1.2px">Syno</span><span style="font-family:'Liberation Serif',serif;font-size:23px;letter-spacing:-0.6px">logy</span>
</div>
<div class="abs" style="left:969px;top:912px;white-space:nowrap;font-size:19px;line-height:22px;color:#b8c4d0;letter-spacing:.2px;text-shadow:1px 1px 0 #6a7a8a,-0.5px -0.5px 0 #fff">DSM 4.1</div>
<!-- watermark -->
<svg class="abs" style="left:1630px;top:890px" width="75" height="68" viewBox="0 0 75 68">
<defs><linearGradient id="wmg" x1="1" y1="0" x2="0" y2="1"><stop offset="0" stop-color="#f4f8ff"/><stop offset=".45" stop-color="#b8cdf4"/><stop offset="1" stop-color="#7f98dc"/></linearGradient></defs>
<path d="M30,6 L66,14 Q71,15 70,20 L61,58 Q60,63 55,62 L10,50 Q5,49 6,44 L20,12 Q23,5 30,6Z" fill="url(#wmg)" opacity=".7" stroke="#9aa8c8" stroke-opacity=".5" stroke-width="1"/>
<path d="M29,21 L45,42 M23,37 L52,27" stroke="#fff" stroke-width="5" opacity=".75" stroke-linecap="round"/>
</svg>
<div class="abs" style="left:1703px;top:915px;font-family:'Liberation Mono',monospace;font-weight:bold;font-size:23px;line-height:26px;color:#4a6ab0;opacity:.5;letter-spacing:0px;white-space:nowrap;transform:scale(.724,1);transform-origin:0 0">xtremehardware.com</div>
</body></html>
